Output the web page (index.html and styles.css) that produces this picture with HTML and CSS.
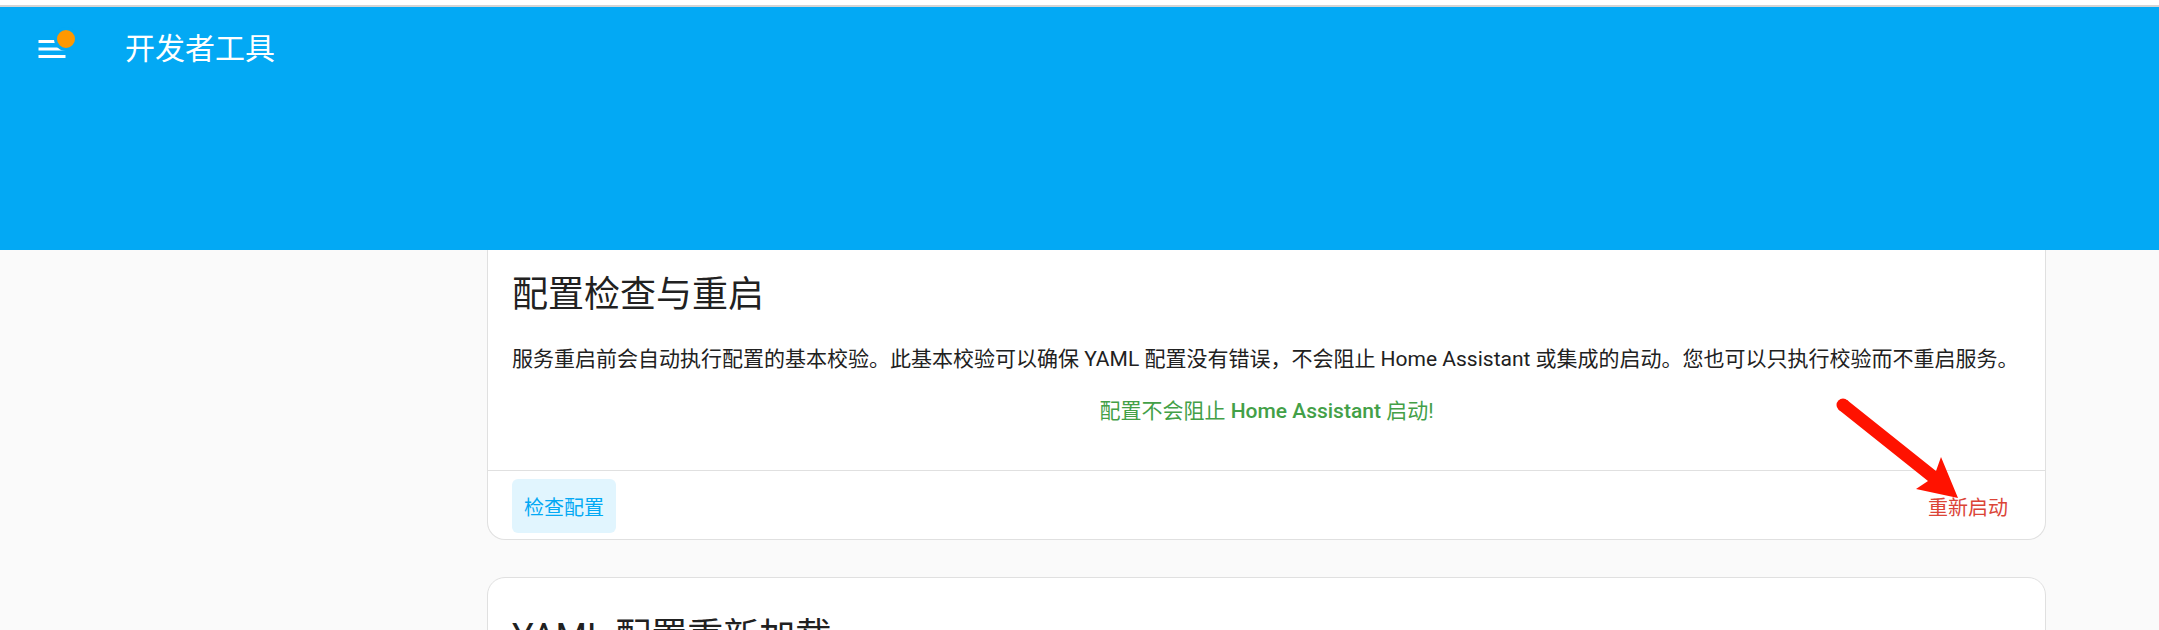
FILE: index.html
```html
<!DOCTYPE html>
<html lang="zh-CN">
<head>
    <meta charset="UTF-8">
    <meta name="viewport" content="width=device-width, initial-scale=1.0">
    <title>开发者工具</title>
    <link rel="stylesheet" href="styles.css">
</head>
<body>
    <div class="topline"></div>

    <header class="app-header">
        <div class="toolbar">
            <button class="menu-btn" aria-label="菜单">
                <svg class="menu-icon" viewBox="0 0 24 24">
                    <path d="M3,6H21V8H3V6M3,11H21V13H3V11M3,16H21V18H3V16Z"></path>
                </svg>
                <span class="badge"></span>
            </button>
            <div class="title">开发者工具</div>
        </div>
    </header>

    <main class="content">
        <div class="card card-first">
            <div class="card-content">
                <h1 class="card-title">配置检查与重启</h1>
                <p class="desc">服务重启前会自动执行配置的基本校验。此基本校验可以确保 YAML 配置没有错误，不会阻止 Home Assistant 或集成的启动。您也可以只执行校验而不重启服务。</p>
                <p class="result">配置不会阻止 <b>Home Assistant</b> 启动!</p>
            </div>
            <div class="card-actions">
                <button class="btn btn-check">检查配置</button>
                <button class="btn btn-restart">重新启动</button>
            </div>
        </div>

        <div class="card card-next">
            <div class="card-content">
                <h1 class="card-title">YAML 配置重新加载</h1>
            </div>
        </div>
    </main>

    <!-- red annotation arrow -->
    <svg class="annotation" viewBox="0 0 2159 630">
        <circle cx="1843" cy="405" r="6.5" fill="#ff1200"></circle>
        <polygon fill="#ff1200" points="1839,410 1847,400 1936,471 1941,457 1958,498 1916,489 1928,481"></polygon>
    </svg>
</body>
</html>
```

FILE: styles.css
```css
* {
    margin: 0;
    padding: 0;
    box-sizing: border-box;
}

html, body {
    height: 630px;
    overflow: hidden;
}

body {
    font-family: Roboto, "Noto Sans CJK SC", sans-serif;
    background-color: #fafafa;
    color: #212121;
    position: relative;
}

.topline {
    height: 7px;
    background-color: #fff;
    border-bottom: 2px solid #d4d4d4;
}

.app-header {
    background-color: #03a9f4;
    color: #fff;
    height: 243px;
}

.toolbar {
    display: flex;
    align-items: center;
    height: 84px;
    padding-left: 34px;
}

.menu-btn {
    position: relative;
    width: 36px;
    height: 36px;
    background: none;
    border: none;
    cursor: pointer;
}

.menu-icon {
    display: block;
    width: 36px;
    height: 36px;
    fill: #fff;
}

.badge {
    position: absolute;
    top: -4px;
    left: 20px;
    width: 24px;
    height: 24px;
    border-radius: 50%;
    background-color: #ff9800;
    border: 3px solid #03a9f4;
}

.title {
    margin-left: 55px;
    font-size: 30px;
    font-weight: 400;
    line-height: 40px;
}

.content {
    padding: 0 113px 0 487px;
}

.card {
    background-color: #fff;
    border: 1px solid #e0e0e0;
    border-radius: 18px;
}

.card-first {
    border-top: none;
    border-radius: 0 0 18px 18px;
}

.card-next {
    margin-top: 37px;
}

.card-content {
    padding: 20px 24px 43px;
}

.card-next .card-content {
    padding-top: 34px;
}

.card-title {
    font-size: 36px;
    font-weight: 400;
    line-height: 50px;
    color: #212121;
}

.desc {
    margin-top: 24px;
    font-size: 21px;
    line-height: 31px;
}

.result {
    margin-top: 21px;
    font-size: 21px;
    line-height: 31px;
    text-align: center;
    color: #43a047;
}

.result b {
    font-weight: 500;
}

.card-actions {
    display: flex;
    justify-content: space-between;
    align-items: center;
    border-top: 1px solid #e0e0e0;
    padding: 8px 24px 6px;
}

.btn {
    height: 54px;
    padding: 0 12px;
    border: none;
    border-radius: 6px;
    background: none;
    font-family: Roboto, "Noto Sans CJK SC", sans-serif;
    font-size: 20px;
    cursor: pointer;
}

.btn-check {
    background-color: #e1f5fe;
    color: #03a9f4;
}

.btn-restart {
    color: #db4437;
    padding-right: 13px;
}

.annotation {
    position: absolute;
    top: 0;
    left: 0;
    width: 2159px;
    height: 630px;
    pointer-events: none;
}
```
